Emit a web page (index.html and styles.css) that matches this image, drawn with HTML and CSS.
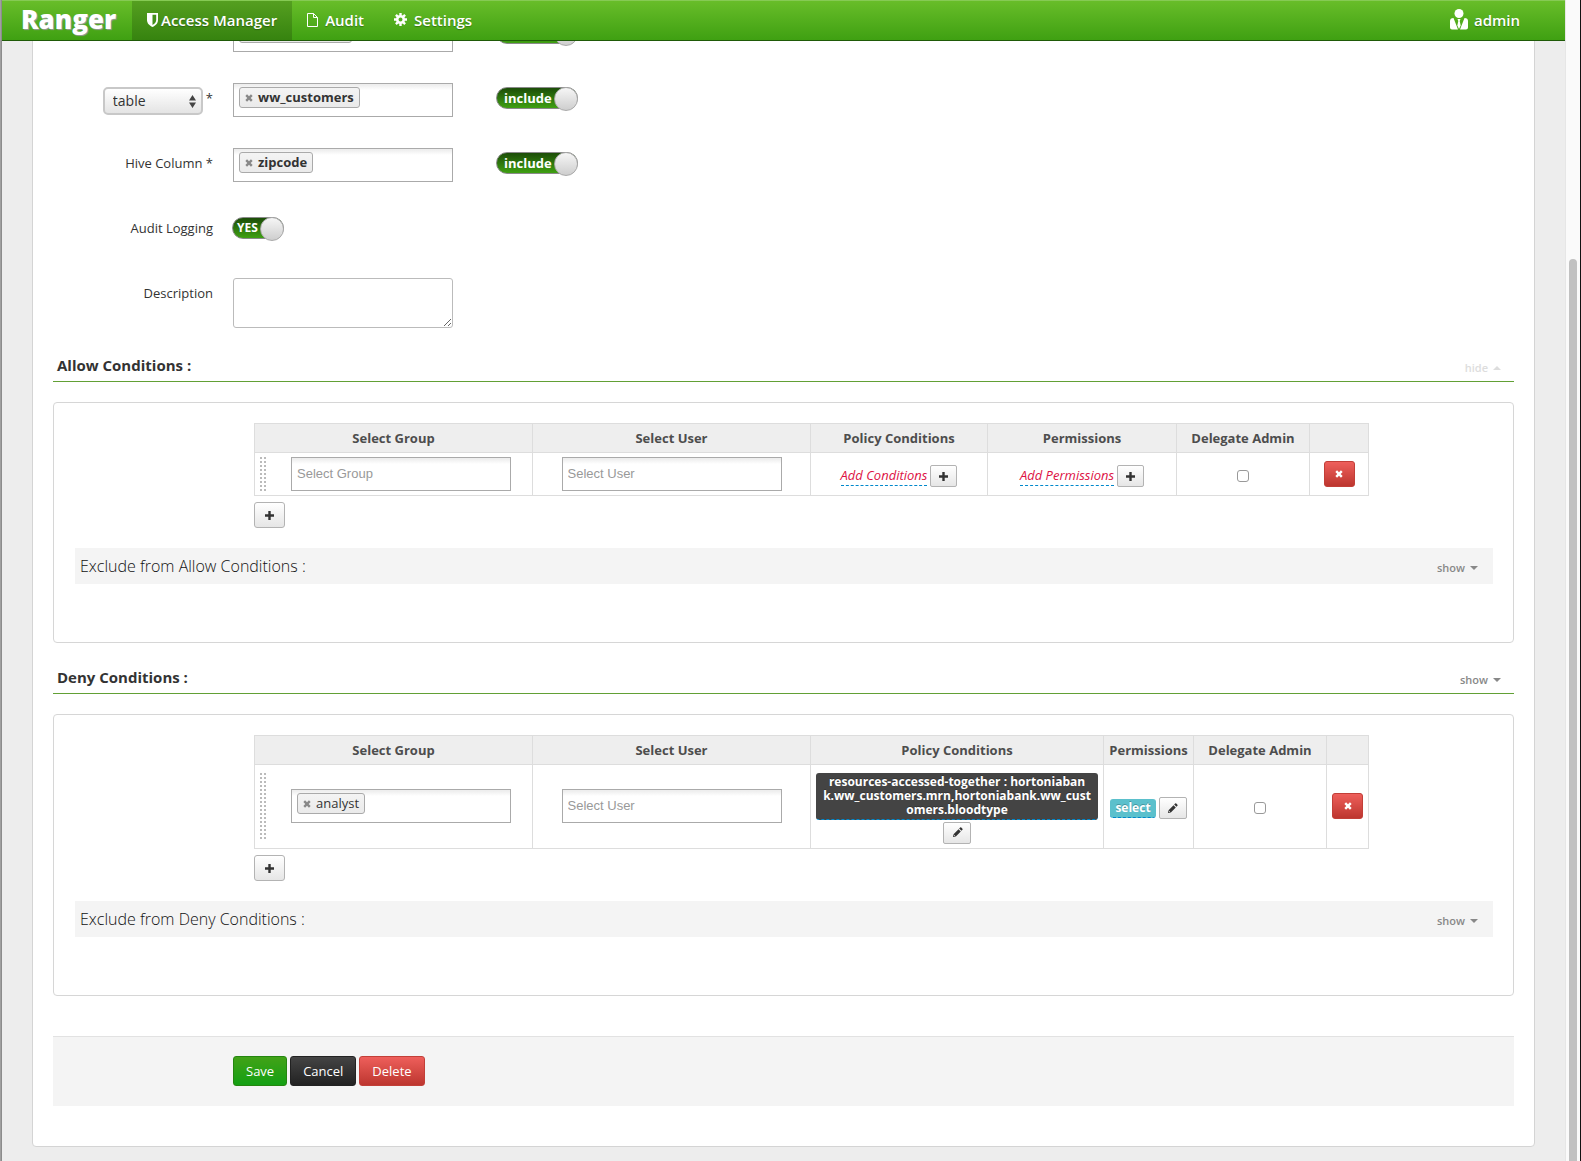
FILE: index.html
```html
<!DOCTYPE html>
<html lang="en">
<head>
<meta charset="utf-8">
<title>Ranger - Edit Policy</title>
<link rel="stylesheet" href="styles.css">
</head>
<body>
<svg width="0" height="0" class="sprite" aria-hidden="true">
  <symbol id="plus" viewBox="0 0 9 9"><path d="M3.3 0h2.4v3.3H9v2.4H5.7V9H3.3V5.7H0V3.3h3.3z"/></symbol>
  <symbol id="cross" viewBox="0 0 9 9"><path d="M2.3.4 4.5 2.6 6.7.4 8.6 2.3 6.4 4.5l2.2 2.2-1.9 1.9-2.2-2.2-2.2 2.2L.4 6.7l2.2-2.2L.4 2.3z"/></symbol>
  <symbol id="pencil" viewBox="0 0 12 12"><path d="M1 11l.7-3.2 5.4-5.4 2.5 2.5-5.4 5.4zM7.8 1.7 8.9.6q.6-.5 1.2 0l1.3 1.3q.5.6 0 1.2l-1.1 1.1z"/><path d="M2 8.6 3.4 10" stroke="#eee" stroke-width=".8"/></symbol>
</svg>
<div class="shell">
  <div class="edge"></div>
  <div class="page">
    <header class="topbar">
      <a class="brand" href="#">Ranger</a>
      <nav class="nav">
        <a class="nav-link active" href="#"><svg width="11" height="14" viewBox="0 0 11 14"><path fill="#fff" d="M0 0h11v7c0 3.5-2.5 5.6-5.5 7C2.5 12.6 0 10.5 0 7z"/><path fill="#42901a" d="M5.5 1.8h3.7V7c0 2.3-1.6 3.8-3.7 5z"/></svg>Access Manager</a>
        <a class="nav-link" href="#"><svg class="doc" width="11" height="14" viewBox="0 0 11 14"><path fill="none" stroke="#fff" d="M.5.5h6l4 4v9H.5zM6.5.5v4h4"/></svg>Audit</a>
        <a class="nav-link" href="#"><svg class="gear" width="13" height="13" viewBox="0 0 13 13"><circle cx="6.5" cy="6.5" r="3.3" fill="none" stroke="#fff" stroke-width="2.6"/><path stroke="#fff" stroke-width="2.4" d="M6.5 0v2.5M6.5 10.5V13M0 6.5h2.5M10.5 6.5H13M1.9 1.9l1.8 1.8M9.3 9.3l1.8 1.8M1.9 11.1l1.8-1.8M9.3 3.7l1.8-1.8"/></svg>Settings</a>
      </nav>
      <a class="user" href="#"><svg width="18" height="21" viewBox="0 0 18 21"><circle cx="9" cy="4.5" r="4.5" fill="#fff"/><path fill="#fff" d="M3.5 9 8 20.5H2q-2 0-2-2V12q0-3 3.5-3zM14.5 9 10 20.5h6q2 0 2-2V12q0-3-3.5-3zM7.5 10h3l-.8 2 1 4.5L9 20l-1.7-3.5 1-4.5z"/></svg>admin</a>
    </header>
    <main class="panel">
      <form>
      <div class="form">
        <div class="row">
          <span></span>
          <div class="chips"><span class="chip wide"></span></div>
          <label class="toggle"><input type="checkbox" aria-label="Include database" checked><span></span></label>
        </div>
        <div class="row">
          <div class="label pick"><span class="select"><select aria-label="Resource"><option>table</option></select><svg width="7" height="13" viewBox="0 0 7 13"><path fill="#444" d="M3.5 0 7 5.5H0zM0 7.5h7L3.5 13z"/></svg></span><span>*</span></div>
          <div class="chips"><span class="chip"><button type="button" aria-label="Remove"><svg><use href="#cross"/></svg></button><b>ww_customers</b></span><input aria-label="Table"></div>
          <label class="toggle"><input type="checkbox" checked><span>include</span></label>
        </div>
        <div class="row">
          <label class="label" for="column">Hive Column *</label>
          <div class="chips"><span class="chip"><button type="button" aria-label="Remove"><svg><use href="#cross"/></svg></button><b>zipcode</b></span><input id="column"></div>
          <label class="toggle"><input type="checkbox" checked><span>include</span></label>
        </div>
        <div class="row">
          <label class="label" for="audit">Audit Logging</label>
          <label class="toggle short"><input type="checkbox" id="audit" checked><span>YES</span></label>
        </div>
        <div class="row">
          <label class="label" for="description">Description</label>
          <textarea id="description"></textarea>
        </div>
      </div>

      <div class="heading"><h2>Allow Conditions :</h2><a class="fold faint" href="#">hide <i class="caret up"></i></a></div>
      <section class="box">
        <table>
          <colgroup><col class="c-who"><col class="c-who"><col><col class="c-perm"><col class="c-admin"><col class="c-del"></colgroup>
          <thead><tr><th>Select Group</th><th>Select User</th><th>Policy Conditions</th><th>Permissions</th><th>Delegate Admin</th><th></th></tr></thead>
          <tbody><tr>
            <td><div class="group"><i class="grip"></i><input class="field" placeholder="Select Group" aria-label="Select Group"></div></td>
            <td><input class="field" placeholder="Select User" aria-label="Select User"></td>
            <td><div class="edit"><a class="add" href="#">Add Conditions</a><button type="button" class="btn mini" aria-label="Add conditions"><svg><use href="#plus"/></svg></button></div></td>
            <td><div class="edit"><a class="add" href="#">Add Permissions</a><button type="button" class="btn mini" aria-label="Add permissions"><svg><use href="#plus"/></svg></button></div></td>
            <td><input type="checkbox" class="check" aria-label="Delegate Admin"></td>
            <td><button type="button" class="btn red small" aria-label="Remove row"><svg><use href="#cross"/></svg></button></td>
          </tr></tbody>
        </table>
        <button type="button" class="btn small more" aria-label="Add row"><svg><use href="#plus"/></svg></button>
        <div class="exclude"><h3>Exclude from Allow Conditions :</h3><a class="fold" href="#">show <i class="caret"></i></a></div>
      </section>

      <div class="heading"><h2>Deny Conditions :</h2><a class="fold" href="#">show <i class="caret"></i></a></div>
      <section class="box">
        <table class="deny">
          <colgroup><col class="c-who"><col class="c-who"><col><col class="c-perm"><col class="c-admin"><col class="c-del"></colgroup>
          <thead><tr><th>Select Group</th><th>Select User</th><th>Policy Conditions</th><th>Permissions</th><th>Delegate Admin</th><th></th></tr></thead>
          <tbody><tr>
            <td><div class="group"><i class="grip tall"></i><div class="chips"><span class="chip"><button type="button" aria-label="Remove"><svg><use href="#cross"/></svg></button>analyst</span><input aria-label="Select Group"></div></div></td>
            <td><input class="field" placeholder="Select User" aria-label="Select User"></td>
            <td><div class="stack"><a class="condition" href="#">resources-accessed-together : hortoniaban<br>k.ww_customers.mrn,hortoniabank.ww_cust<br>omers.bloodtype</a><button type="button" class="btn mini pen" aria-label="Edit conditions"><svg><use href="#pencil"/></svg></button></div></td>
            <td><div class="edit"><a class="perm" href="#">select</a><button type="button" class="btn mini pen" aria-label="Edit permissions"><svg><use href="#pencil"/></svg></button></div></td>
            <td><input type="checkbox" class="check" aria-label="Delegate Admin"></td>
            <td><button type="button" class="btn red small" aria-label="Remove row"><svg><use href="#cross"/></svg></button></td>
          </tr></tbody>
        </table>
        <button type="button" class="btn small more" aria-label="Add row"><svg><use href="#plus"/></svg></button>
        <div class="exclude"><h3>Exclude from Deny Conditions :</h3><a class="fold" href="#">show <i class="caret"></i></a></div>
      </section>

      <div class="actions">
        <button type="button" class="btn green">Save</button>
        <button type="button" class="btn black">Cancel</button>
        <button type="button" class="btn red">Delete</button>
      </div>
      </form>
    </main>
  </div>
  <div class="track"><div class="thumb"></div></div>
  <div class="edge dark"></div>
</div>
</body>
</html>
```
FILE: styles.css
```css
* { box-sizing: border-box; }
body {
  margin: 0;
  background: #ededed;
  color: #333;
  font: 13px/20px "Open Sans", "Liberation Sans", sans-serif;
}
a { text-decoration: none; color: inherit; }
h2, h3 { margin: 0; }
button, input, select, textarea { font: inherit; color: inherit; margin: 0; }
.sprite { position: absolute; }

.shell { display: grid; grid-template-columns: 2px 1fr 15px 1px; min-height: 100vh; }
.edge { background: #a0a0a0; border-right: 1px solid #8c8c8c; }
.edge.dark { background: #111; border: 0; }
.track { background: #fafafa; border-left: 1px solid #e6e6e6; padding: 259px 3px 0; display: flex; }
.thumb { flex: 1; background: #c1c1c1; border-radius: 4px 4px 0 0; }

/* top bar */
.topbar {
  position: relative;
  z-index: 2;
  display: flex;
  height: 41px;
  background: linear-gradient(#68bd29, #3fa012);
  border-top: 1px solid #86ca54;
  border-bottom: 1px solid #1f5a08;
  color: #fff;
  font-size: 15px;
  font-weight: 600;
  line-height: 36px;
  text-shadow: 0 1px 1px rgba(0, 0, 0, .3);
}
.brand { width: 130px; padding-left: 19px; font-size: 26px; font-weight: 800; text-shadow: 1px 1px 1px #999; }
.nav { display: flex; flex: 1; }
.nav-link { display: flex; align-items: center; padding: 0 15px 2px; }
.nav-link svg { margin-right: 3px; }
.nav-link .doc, .nav-link .gear { margin-right: 7px; }
.active { background: linear-gradient(#559f20, #36830f); }
.user { display: flex; align-items: center; gap: 6px; padding: 0 45px 2px 0; }

/* panel and form */
.panel {
  margin: -24px 30px 0;
  padding: 0 20px 40px;
  background: #fff;
  border: 1px solid #d4d4d4;
  border-radius: 0 0 4px 4px;
}
.form { display: grid; gap: 31px; }
.row { display: grid; grid-template-columns: 160px 220px auto; column-gap: 20px; height: 34px; justify-content: start; }
.row:last-child { height: 50px; }
.label { padding-top: 5px; text-align: right; }
.pick { display: flex; justify-content: flex-end; gap: 3px; }
.select { position: relative; width: 100px; height: 28px; margin-top: -1px; }
.select select {
  appearance: none;
  width: 100%;
  height: 28px;
  padding: 0 8px;
  border: 2px solid #c8c8c8;
  border-radius: 5px;
  background: linear-gradient(#fff, #e4e4e4);
  font-size: 14px;
}
.select svg { position: absolute; right: 7px; top: 8px; }
.chips, .field {
  width: 220px;
  height: 34px;
  border: 1px solid #aaa;
  border-radius: 0;
  background: linear-gradient(#eee 1px, #fff 6px);
}
.chips { display: flex; padding: 3px 5px; }
.chips input { flex: 1; min-width: 0; border: 0; padding: 0; background: none; }
.chip {
  display: flex;
  align-items: center;
  gap: 5px;
  height: 21px;
  padding: 0 5px 1px;
  border: 1px solid #aaa;
  border-radius: 3px;
  background: linear-gradient(#f4f4f4, #eaeaea);
}
.chip.wide { width: 113px; }
.chip button { display: flex; padding: 2px 0 0; border: 0; background: none; color: #888; }
.chip svg { width: 8px; height: 8px; }
svg { fill: currentColor; flex: none; }
.toggle { position: relative; width: 82px; height: 22px; margin: 4px 0 0 23px; }
.toggle.short { width: 52px; margin-left: -1px; }
.toggle input { position: absolute; opacity: 0; }
.toggle span {
  display: block;
  height: 22px;
  padding-left: 7px;
  border: 1px solid #8a8a8a;
  border-radius: 11px;
  background: linear-gradient(#1c4d08, #3fa012);
  color: #fff;
  font-weight: 700;
  line-height: 20px;
}
.toggle.short span { padding-left: 4px; font-size: 12px; }
.toggle span::after {
  content: "";
  position: absolute;
  right: 0;
  top: 0;
  width: 22px;
  height: 22px;
  border: 1px solid #aaa;
  border-radius: 50%;
  background: linear-gradient(#f6f6f6, #cecece);
}
textarea { width: 220px; height: 50px; border: 1px solid #bbb; border-radius: 3px; background: #fff; resize: both; }

/* section headings */
.heading {
  display: flex;
  justify-content: space-between;
  height: 30px;
  margin: 21px 0 20px;
  padding: 0 13px 0 4px;
  border-bottom: 1px solid #62a035;
}
.form + .heading { margin-top: 24px; }
.heading h2 { font-size: 15px; line-height: 27px; font-weight: 700; }
.fold { display: flex; align-items: center; gap: 5px; padding-top: 3px; color: #888; font-size: 11px; font-weight: 600; }
.faint { color: #ddd; }
.caret { border: 4px solid transparent; border-top-color: currentColor; border-bottom: 0; }
.caret.up { border-top: 0; border-bottom: 4px solid; }

/* condition boxes */
.box { padding: 20px 20px 58px; border: 1px solid #d6d6d6; border-radius: 4px; }
table { width: calc(100% - 304px); margin-left: 180px; border-collapse: collapse; table-layout: fixed; }
.c-who { width: 278px; }
.c-perm { width: 189px; }
.c-admin { width: 133px; }
.c-del { width: 59px; }
.deny .c-perm { width: 90px; }
.deny .c-del { width: 42px; }
th, td { border: 1px solid #ddd; padding: 0; text-align: center; vertical-align: middle; }
th { height: 29px; background: #eee; color: #4d4d4d; font-weight: 700; }
td { height: 43px; padding-bottom: 1px; }
.deny td { height: 84px; padding-bottom: 2px; }
.group { display: flex; align-items: center; padding-left: 5px; gap: 25px; }
.grip { position: relative; width: 6px; height: 34px; background: repeating-linear-gradient(#bbb 0 2px, transparent 2px 4px); }
.grip.tall { height: 66px; }
.grip::after { content: ""; position: absolute; left: 2px; top: 0; width: 2px; height: 100%; background: #fff; }
.field { padding: 0 5px; font-family: "Liberation Sans", Arial, sans-serif; vertical-align: middle; }
.field::placeholder { color: #999; opacity: 1; }
.edit { display: flex; align-items: center; justify-content: center; gap: 3px; padding-top: 5px; }
.add { border-bottom: 1px dashed #08c; color: #d14; font-style: italic; line-height: 19px; }
.stack { display: flex; flex-direction: column; align-items: center; gap: 2px; padding: 5px 5px 0; }
.condition, .perm {
  border-radius: 3px;
  border-bottom: 1px dashed #08c;
  background: #444;
  color: #fff;
  font-size: 12px;
  font-weight: 700;
  line-height: 14px;
  text-shadow: 0 -1px 0 rgba(0, 0, 0, .25);
}
.condition { align-self: stretch; padding: 2px 4px; }
.perm { padding: 2px 5px; background: #5bc0cc; }
.check {
  appearance: none;
  width: 12px;
  height: 12px;
  margin-top: 2px;
  border: 1px solid #999;
  border-radius: 3px;
  background: #fff;
  vertical-align: middle;
}

.btn {
  display: inline-flex;
  align-items: center;
  justify-content: center;
  height: 30px;
  padding: 0 12px;
  border: 1px solid #b3b3b3;
  border-radius: 3px;
  background: linear-gradient(#fff, #e6e6e6);
  color: #333;
}
.btn svg { width: 9px; height: 9px; }
.small { width: 31px; height: 26px; padding: 0; vertical-align: middle; }
.mini { width: 27px; height: 22px; padding: 0; border-radius: 2px; }
.pen { width: 28px; }
.pen svg { width: 11px; height: 11px; }
.more { display: flex; margin: 6px 0 20px 180px; }
.green { background: linear-gradient(#42a217, #14a014); border-color: #24860f; color: #fff; }
.black { background: linear-gradient(#444, #222); border-color: #222; color: #fff; }
.red { background: linear-gradient(#ee5f5b, #bd362f); border-color: #c23f38; color: #fff; }
.btn.red svg { width: 8px; height: 8px; }

.exclude { display: flex; justify-content: space-between; height: 36px; margin-left: 1px; padding: 0 15px 0 5px; background: #f4f4f4; }
.exclude h3 { color: #111; font-size: 16px; font-weight: 300; line-height: 36px; }
.actions {
  display: flex;
  gap: 3px;
  height: 70px;
  margin-top: 40px;
  padding: 19px 0 0 180px;
  border-top: 1px solid #e2e2e2;
  background: #f4f4f4;
}
```
